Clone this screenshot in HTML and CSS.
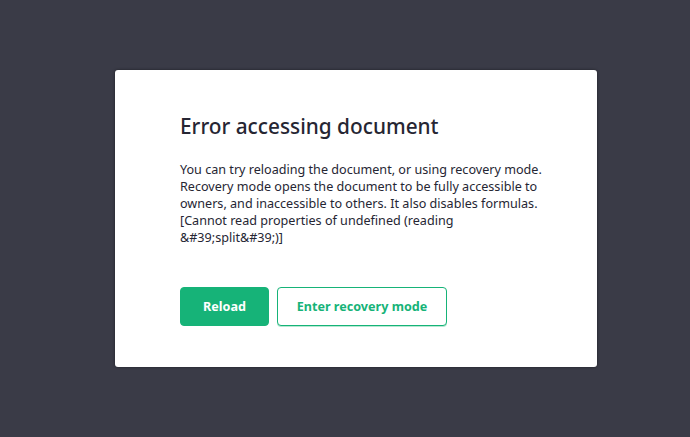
FILE: index.html
```html
<!DOCTYPE html>
<html>
<head>
<meta charset="utf-8">
<link rel="stylesheet" href="styles.css">
</head>
<body>
<div class="modal">
  <h1 class="title">Error accessing document</h1>
  <p class="message">You can try reloading the document, or using recovery mode.<br>Recovery mode opens the document to be fully accessible to<br>owners, and inaccessible to others. It also disables formulas.<br>[Cannot read properties of undefined (reading<br>&amp;#39;split&amp;#39;)]</p>
  <div class="actions">
    <button class="btn btn-primary">Reload</button>
    <button class="btn btn-outline">Enter recovery mode</button>
  </div>
</div>
</body>
</html>
```
FILE: styles.css
```css
html, body {
  margin: 0;
  padding: 0;
  height: 100%;
}
body {
  background: #3a3b47;
  font-family: "Noto Sans", "Open Sans", sans-serif;
  display: flex;
  align-items: center;
  color: #262633;
}
.modal {
  box-sizing: border-box;
  margin-left: 115px;
  width: 482px;
  height: 297px;
  background: #ffffff;
  border-radius: 3px;
  box-shadow: 0 0 3px rgba(0,0,0,0.5);
  padding: 41px 65px 41px;
  display: flex;
  flex-direction: column;
}
.title {
  margin: 0;
  font-size: 20.8px;
  line-height: 30px;
  font-weight: 500;
  color: #262633;
}
.message {
  margin: 20px 0 0;
  font-size: 12.6px;
  line-height: 17px;
  white-space: nowrap;
}
.actions {
  margin-top: auto;
  display: flex;
  gap: 8px;
}
.btn {
  box-sizing: border-box;
  height: 39px;
  border-radius: 4px;
  font-family: inherit;
  font-size: 12.6px;
  font-weight: 700;
  border: 1px solid #16b378;
  cursor: pointer;
  padding: 0;
}
.btn-primary {
  width: 89px;
  background: #16b378;
  color: #ffffff;
}
.btn-outline {
  width: 170px;
  background: #ffffff;
  color: #16b378;
  box-shadow: 0 1px 0 #b6e9d2;
}
```
